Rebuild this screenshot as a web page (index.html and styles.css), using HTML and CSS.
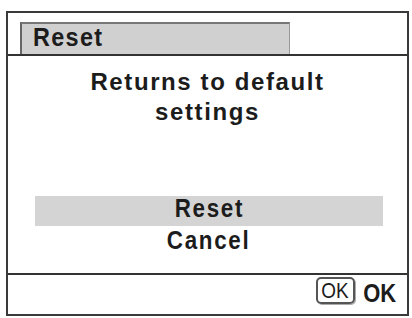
FILE: index.html
```html
<!DOCTYPE html>
<html>
<head>
<meta charset="utf-8">
<link rel="stylesheet" href="styles.css">
</head>
<body>
<div class="screen">
  <div class="header"><div class="tab"><span class="cond">Reset</span></div></div>
  <div class="content">
    <div class="msg">Returns to default<br>settings</div>
    <div class="options">
      <div class="opt sel"><span class="cond">Reset</span></div>
      <div class="opt"><span class="cond">Cancel</span></div>
    </div>
  </div>
  <div class="footer">
    <span class="okkey"><span class="cond">OK</span></span>
    <span class="oklabel"><span class="cond">OK</span></span>
  </div>
</div>
</body>
</html>
```
FILE: styles.css
```css
html, body {
  margin: 0;
  padding: 0;
  background: #ffffff;
}
body {
  font-family: "Liberation Sans", Arial, sans-serif;
  font-weight: bold;
  color: #1c1c1c;
}
.cond {
  display: inline-block;
  transform: scaleX(0.86);
}
.screen {
  box-sizing: border-box;
  margin: 11px 0 0 6px;
  width: 403px;
  height: 305px;
  border: 2px solid #3a3a3a;
  display: flex;
  flex-direction: column;
}
.header {
  height: 41px;
  box-sizing: border-box;
  padding: 9px 0 0 12px;
  display: flex;
}
.tab {
  box-sizing: border-box;
  width: 270px;
  height: 32px;
  background: #d0d0d0;
  border-top: 2px solid #777;
  border-left: 2px solid #666;
  border-right: 1px solid #999;
  padding-left: 11px;
  font-size: 26px;
  letter-spacing: 1.5px;
  line-height: 26px;
}
.tab .cond {
  transform: scaleX(0.9);
  transform-origin: left center;
}
.content {
  height: 221px;
  box-sizing: border-box;
  border-top: 2px solid #333;
  border-bottom: 2px solid #333;
  padding-top: 11px;
  display: flex;
  flex-direction: column;
}
.msg {
  text-align: center;
  font-size: 24px;
  line-height: 30px;
  letter-spacing: 1.6px;
}
.options {
  margin: 69px 24px 0 27px;
  display: flex;
  flex-direction: column;
}
.opt {
  text-align: center;
  font-size: 26px;
  letter-spacing: 2px;
  line-height: 28px;
}
.opt.sel {
  background: #d4d4d4;
  height: 30px;
  line-height: 24px;
}
.footer {
  flex: 1;
  display: flex;
  justify-content: flex-end;
  align-items: flex-start;
  gap: 6px;
  padding-right: 9px;
}
.okkey {
  box-sizing: border-box;
  width: 39px;
  height: 27px;
  margin-top: 2px;
  border: 2px solid #555;
  border-radius: 5px;
  box-shadow: 1px 1px 0 #aaa;
  font-weight: normal;
  font-size: 22px;
  line-height: 23px;
  text-align: center;
}
.oklabel {
  margin-top: 3px;
  font-size: 25px;
  line-height: 30px;
}
.oklabel .cond {
  transform: scaleX(0.88);
}
```
